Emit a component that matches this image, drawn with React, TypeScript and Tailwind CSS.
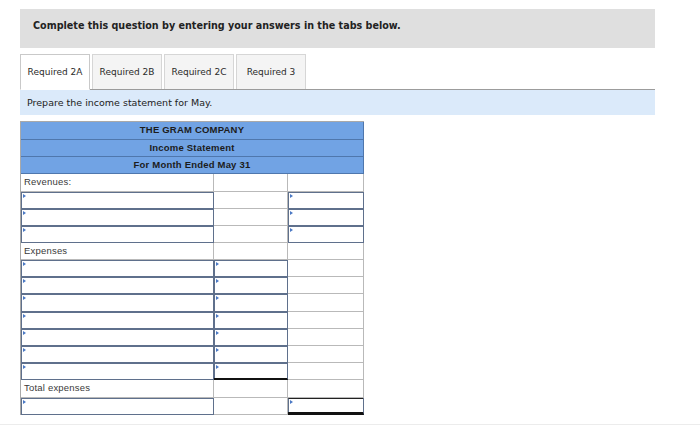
import React from "react";

type CellKind = "plain" | "input" | "inputUnder" | "inputTotal";

const Flag = () => (
  <div className="absolute top-[1px] left-[1px] w-0 h-0 border-y-[2px] border-y-transparent border-l-[3px] border-l-[#4a78c4]" />
);

const Cell = ({ kind, w, children }: { kind: CellKind; w: string; children?: React.ReactNode }) => {
  if (kind === "input") {
    return (
      <div className={`relative ${w} h-full border-r border-b border-[#5f708c] shrink-0`}>
        <div className="absolute inset-0 border-t border-l border-[#5f708c] bg-white">
          <Flag />
        </div>
      </div>
    );
  }
  if (kind === "inputUnder") {
    return (
      <div className={`relative ${w} h-full border-r border-b-2 border-r-[#5f708c] border-b-[#111] shrink-0`}>
        <div className="absolute inset-0 border-t border-l border-[#5f708c] bg-white">
          <Flag />
        </div>
      </div>
    );
  }
  if (kind === "inputTotal") {
    return (
      <div className={`relative ${w} h-full border-r border-b-[3px] border-r-[#5f708c] border-b-[#111] shrink-0`}>
        <div className="absolute inset-0 border-t border-l border-t-[#222] border-l-[#5f708c] bg-white">
          <Flag />
        </div>
      </div>
    );
  }
  return (
    <div
      className={`relative ${w} h-full border-r border-b border-[#b9b9b9] shrink-0 flex items-center pl-[3px] text-[9.5px] text-[#3a3a3a] tracking-[0.2px]`}
    >
      {children}
    </div>
  );
};

type Row = { h: number; c: [CellKind, CellKind, CellKind]; label?: string };

const rows: Row[] = [
  { h: 18, c: ["plain", "plain", "plain"], label: "Revenues:" },
  { h: 17, c: ["input", "plain", "input"] },
  { h: 17, c: ["input", "plain", "input"] },
  { h: 17, c: ["input", "plain", "input"] },
  { h: 17, c: ["plain", "plain", "plain"], label: "Expenses" },
  { h: 17, c: ["input", "input", "plain"] },
  { h: 17, c: ["input", "input", "plain"] },
  { h: 18, c: ["input", "input", "plain"] },
  { h: 17, c: ["input", "input", "plain"] },
  { h: 17, c: ["input", "input", "plain"] },
  { h: 17, c: ["input", "input", "plain"] },
  { h: 17, c: ["input", "inputUnder", "plain"] },
  { h: 18, c: ["plain", "plain", "plain"], label: "Total expenses" },
  { h: 17, c: ["input", "plain", "inputTotal"] },
];

const widths = ["w-[193px]", "w-[74px]", "w-[76px]"];

export default function App() {
  const verdana = { fontFamily: "Verdana, 'DejaVu Sans', sans-serif" };
  return (
    <div className="w-[700px] h-[427px] bg-white overflow-hidden relative">
      <div className="pt-[9px] pl-[20px]">
        <div
          className="w-[635px] h-[39px] bg-[#dfdfdf] pt-[11px] pl-[13px] text-[9.6px] leading-[12px] font-bold text-[#222]"
          style={verdana}
        >
          Complete this question by entering your answers in the tabs below.
        </div>
        <div className="mt-[6px] w-[635px] h-[36px] flex items-end gap-[2px] border-b border-[#9c9c9c]" style={verdana}>
          <div className="w-[70px] h-[36px] -mb-px pt-px bg-white border border-[#c9c9c9] border-b-white flex items-center justify-center text-[9px] text-[#2a2a2a]">
            Required 2A
          </div>
          <div className="w-[70px] h-[35px] pt-px bg-[#f4f4f4] border border-b-0 border-[#d6d6d6] flex items-center justify-center text-[9px] text-[#2a2a2a]">
            Required 2B
          </div>
          <div className="w-[70px] h-[35px] pt-px bg-[#f4f4f4] border border-b-0 border-[#d6d6d6] flex items-center justify-center text-[9px] text-[#2a2a2a]">
            Required 2C
          </div>
          <div className="w-[70px] h-[35px] pt-px bg-[#f4f4f4] border border-b-0 border-[#d6d6d6] flex items-center justify-center text-[9px] text-[#2a2a2a]">
            Required 3
          </div>
        </div>
        <div
          className="w-[635px] h-[25px] bg-[#dbeafa] flex items-center pt-[2px] pl-[7px] text-[9.5px] text-[#222]"
          style={verdana}
        >
          Prepare the income statement for May.
        </div>
        <div
          className="mt-[6px] w-[344px] border-l border-t border-[#a9a9a9]"
          style={{ fontFamily: "'Liberation Sans', Arial, sans-serif" }}
        >
          <div className="h-[18px] bg-[#71a3e4] border-r border-b border-[#4f77ad] flex items-center justify-center text-[9.5px] font-bold text-[#1c1c1c] tracking-[0.2px]">
            THE GRAM COMPANY
          </div>
          <div className="h-[17px] bg-[#71a3e4] border-r border-b border-[#4f77ad] flex items-center justify-center text-[9.5px] font-bold text-[#1c1c1c] tracking-[0.2px]">
            Income Statement
          </div>
          <div className="h-[17px] bg-[#71a3e4] border-r border-b border-[#4f77ad] flex items-center justify-center text-[9.5px] font-bold text-[#1c1c1c] tracking-[0.2px]">
            For Month Ended May 31
          </div>
          {rows.map((r, i) => (
            <div key={i} className="flex" style={{ height: r.h }}>
              {r.c.map((k, j) => (
                <Cell key={j} kind={k} w={widths[j]}>
                  {j === 0 ? r.label : null}
                </Cell>
              ))}
            </div>
          ))}
        </div>
      </div>
      <div className="absolute left-0 right-0 top-[424px] h-px bg-[#ececec]" />
    </div>
  );
}
